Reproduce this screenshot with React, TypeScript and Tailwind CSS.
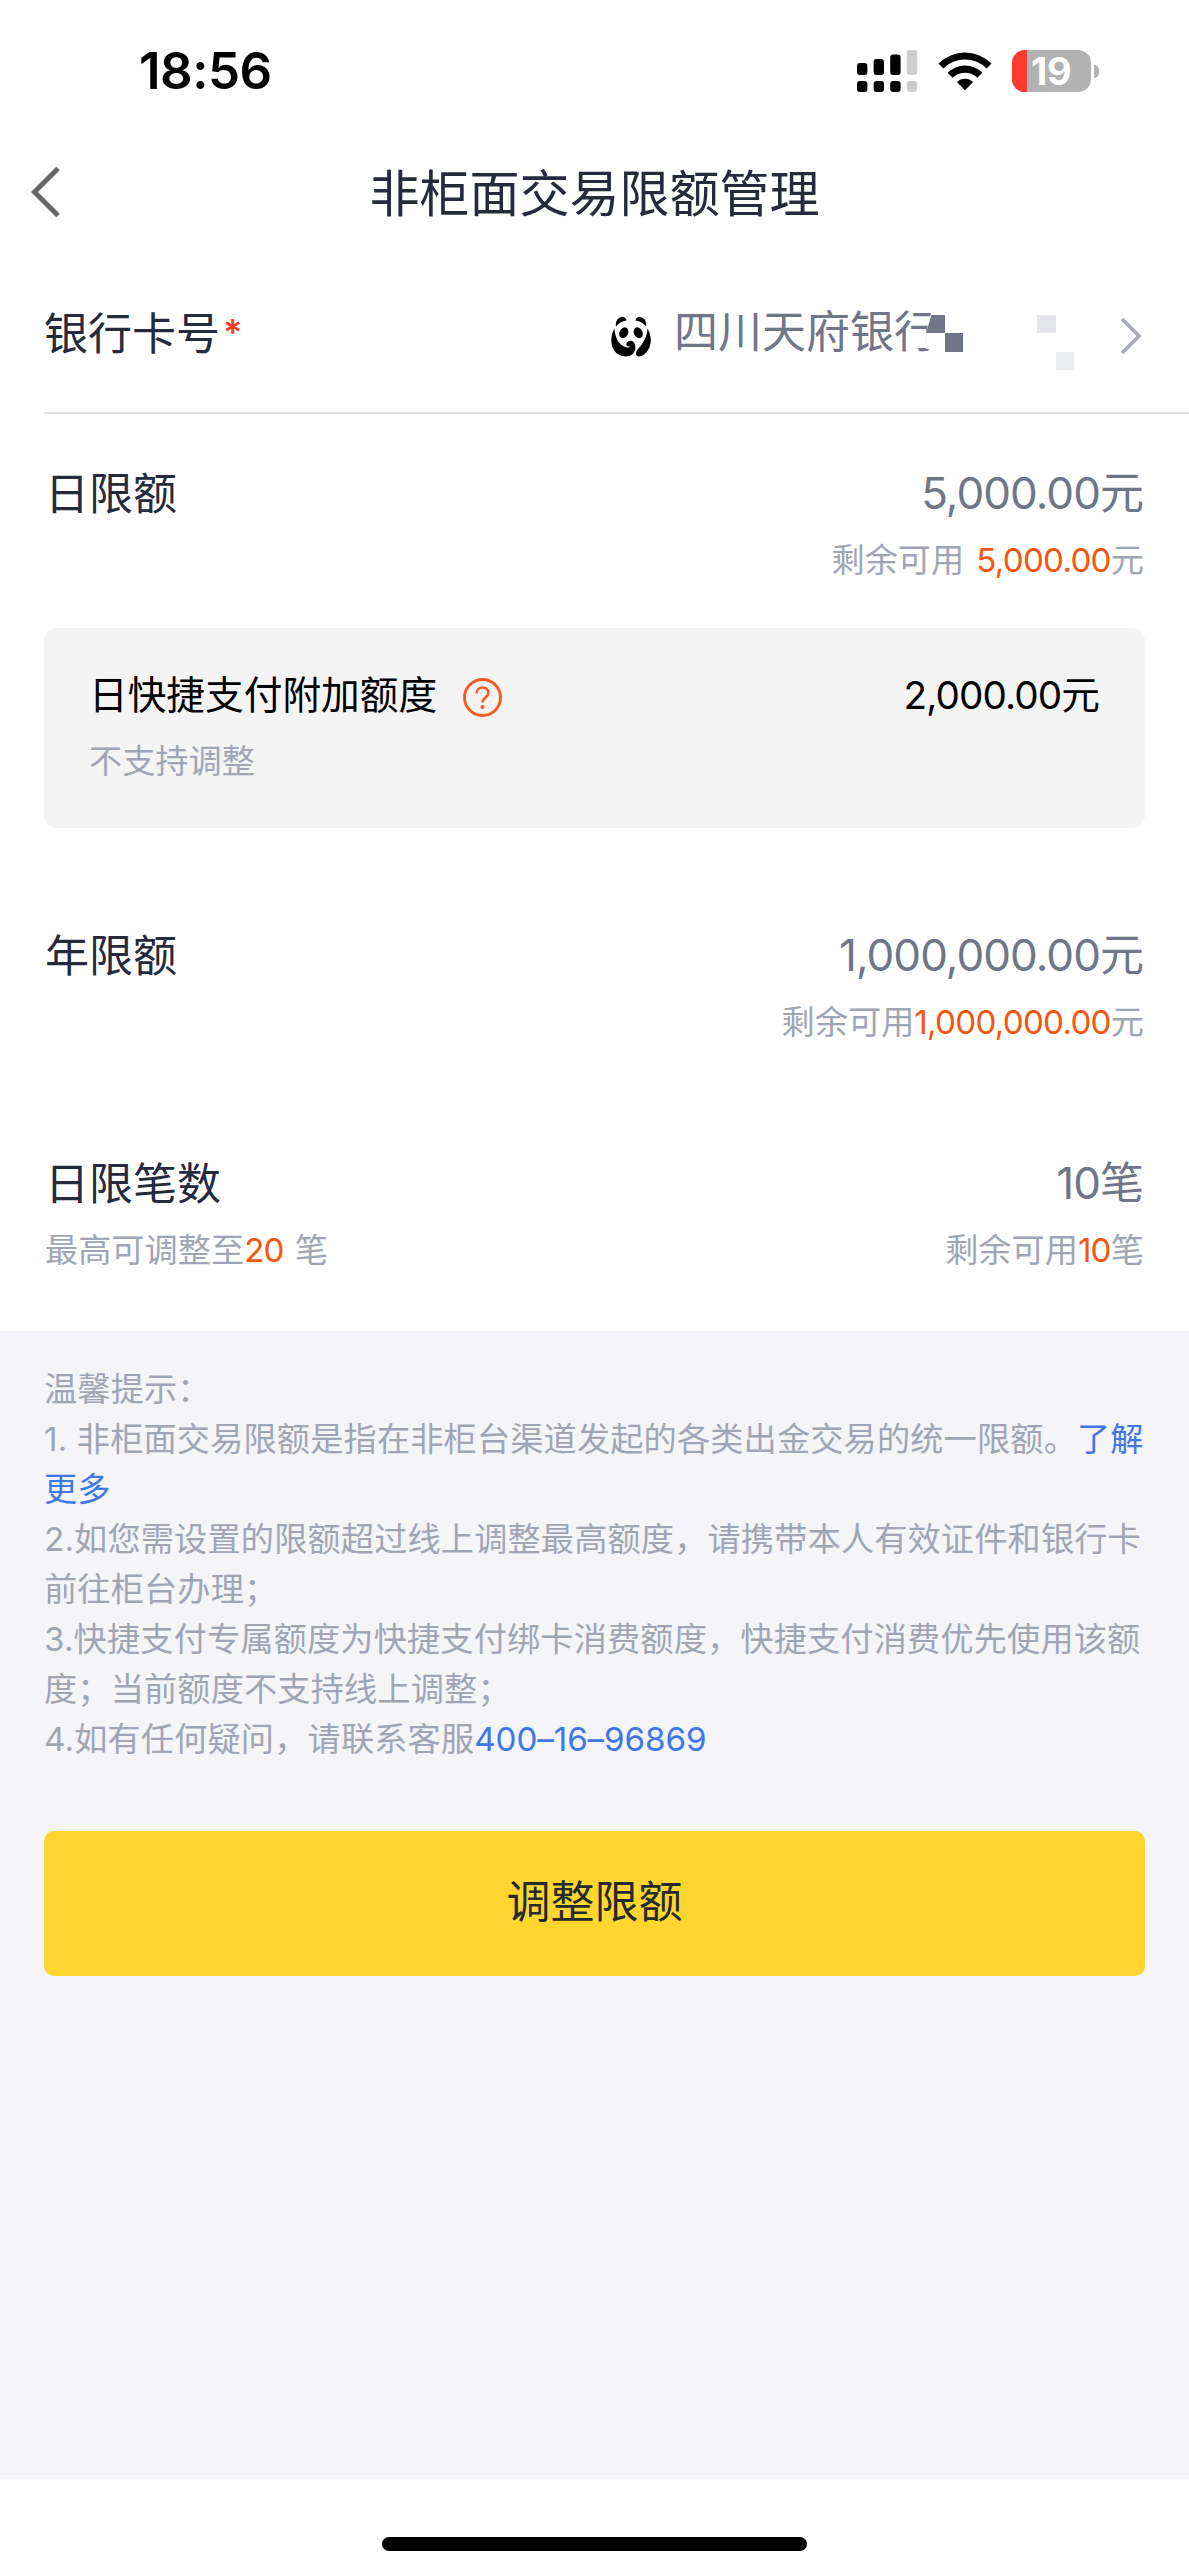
import type { ReactNode } from 'react'

const TIPS: ReactNode[] = [
  '温馨提示：',
  <>
    1. 非柜面交易限额是指在非柜台渠道发起的各类出金交易的统一限额。<a className="text-[#3f77e6]">了解</a>
  </>,
  <a className="text-[#3f77e6]">更多</a>,
  '2.如您需设置的限额超过线上调整最高额度，请携带本人有效证件和银行卡',
  '前往柜台办理；',
  '3.快捷支付专属额度为快捷支付绑卡消费额度，快捷支付消费优先使用该额',
  '度；当前额度不支持线上调整；',
  <>
    4.如有任何疑问，请联系客服<a className="tracking-[-0.1px] text-[#3f77e6]">400–16–96869</a>
  </>,
]

function SignalIcon() {
  const heights = [12, 16, 20.5, 25]
  return (
    <svg width="61" height="42" viewBox="0 0 61 42">
      {heights.map((h, i) => (
        <g key={h} fill={i === 3 ? '#cccccc' : '#000'}>
          <rect x={i * 16.6} y={25 - h} width="10.4" height={h} rx="3" />
          <rect x={i * 16.6} y="31" width="10.4" height="11" rx="3" />
        </g>
      ))}
    </svg>
  )
}

function WifiIcon() {
  return (
    <svg width="54" height="40" viewBox="0 0 54 40">
      <path d="M0.5 12.5 A37.5 37.5 0 0 1 53.5 12.5 L48.6 17.5 A30.5 30.5 0 0 0 5.4 17.5 Z" />
      <path d="M9.6 21.8 A24.6 24.6 0 0 1 44.4 21.8 L39.3 26.8 A17.5 17.5 0 0 0 14.7 26.8 Z" />
      <path d="M18.9 31 A11.5 11.5 0 0 1 35.1 31 L27 39.2 Z" />
    </svg>
  )
}

function BatteryIcon() {
  return (
    <div className="flex items-center gap-[3px]">
      <div className="flex h-[42px] w-[79px] items-center rounded-[13px] bg-[#b2b2b2]">
        <div className="h-full w-[15px] rounded-l-[13px] bg-[#ff3b30]" />
        <span className="ml-[4px] text-[38px] font-bold leading-[42px] tracking-[-0.5px] text-white">19</span>
      </div>
      <div className="h-[13px] w-[5px] rounded-r-full bg-[#b2b2b2]" />
    </div>
  )
}

function PandaLogo() {
  return (
    <svg className="mt-[4px]" width="40" height="41" viewBox="0 0 40 41">
      <path d="M5 10.5 C4 4 8 0.5 12 1 C14 1.3 15.5 3 15.5 4.5 C11 5 7.5 7 5 10.5 Z" />
      <path d="M35 10.5 C36 4 32 0.5 28 1 C26 1.3 24.5 3 24.5 4.5 C29 5 32.5 7 35 10.5 Z" />
      <ellipse cx="12.8" cy="16.8" rx="4.3" ry="5.7" transform="rotate(28 12.8 16.8)" />
      <ellipse cx="27.2" cy="16.8" rx="4.3" ry="5.7" transform="rotate(-28 27.2 16.8)" />
      <path d="M3.5 12.5 C-0.5 19 -1 29 3.5 35 C8.5 41.5 18 42 22 37.5 C25 34 24.5 31 24 29 C23 25 20 24 17 25.5 C14.5 27 15 30.5 18 30.5 C19 30.5 19.5 30 20 29.5 C18.5 32.5 14 32 10 28.5 C5.5 24.5 4 19 3.5 12.5 Z" />
      <path d="M36.5 12.5 C40.5 19 41 28 37 34 C34 39 29 41.5 26 40 C24 38.5 25 35.5 27 33 C32.5 27 36 21 36.5 12.5 Z" />
    </svg>
  )
}

function HelpIcon() {
  return (
    <svg className="mt-[6px]" width="39" height="39" viewBox="0 0 39 39" fill="none" stroke="#f25c1f">
      <circle cx="19.5" cy="19.5" r="18" strokeWidth="2.9" />
      <path d="M13.5 15.5 C13.5 7.5 25.5 7.5 25.5 15 C25.5 19 19.5 19.5 19.5 24.5" strokeWidth="2.5" />
      <circle cx="19.5" cy="29" r="2" fill="#f25c1f" stroke="none" />
    </svg>
  )
}

interface LimitRowProps {
  label: string
  value: string
  hint?: ReactNode
  remain: ReactNode
}

function LimitRow({ label, value, hint, remain }: LimitRowProps) {
  return (
    <div className="flex justify-between px-[45px]">
      <div>
        <p className="pt-px text-[44px] leading-[66px] text-[#252a3d]">{label}</p>
        {hint && <p className="-mt-px text-[33.2px] leading-[68px] text-[#a0a5b5]">{hint}</p>}
      </div>
      <div className="text-right">
        <p className="text-[44px] leading-[66px] text-[#707587]">
          <span className="tracking-[-0.95px]">{value.slice(0, -1)}</span>
          {value.slice(-1)}
        </p>
        <p className="text-[33.2px] leading-[68px] text-[#a0a5b5]">{remain}</p>
      </div>
    </div>
  )
}

function Accent({ children }: { children: ReactNode }) {
  return <span className="tracking-[-0.75px] text-[#f5560f]">{children}</span>
}

export default function App() {
  return (
    <div className="flex h-[2573px] w-[1189px] flex-col overflow-hidden whitespace-nowrap bg-white font-[Inter,'Noto_Sans_CJK_SC',sans-serif] font-normal">
      <header className="flex h-[142px] items-center justify-between pl-[139px] pr-[90px]">
        <span className="text-[51px] font-semibold tracking-[-0.5px] text-black">18:56</span>
        <div className="flex items-center">
          <SignalIcon />
          <div className="ml-5 mr-5">
            <WifiIcon />
          </div>
          <BatteryIcon />
        </div>
      </header>

      <nav className="flex h-[100px] items-center pl-[30px]">
        <svg width="30" height="52" viewBox="0 0 30 52" fill="none" stroke="#666" strokeWidth="5">
          <path d="M28 2.5 L4.5 26 L28 49.5" />
        </svg>
        <h1 className="mr-[60px] flex-1 pt-1 text-center text-[50px] text-[#252a3d]">非柜面交易限额管理</h1>
      </nav>

      <section className="ml-[44px] flex h-[172px] items-center justify-between border-b-2 border-[#e0e1e3] pr-[47px] pt-[14px]">
        <p className="flex items-center text-[44px] text-[#252a3d]">
          银行卡号<span className="ml-[3px] pb-1 text-[36px] font-semibold text-[#f5401f]">*</span>
        </p>
        <div className="flex items-center">
          <PandaLogo />
          <div className="relative ml-[23px] w-[446px] text-[44px] text-[#707587]">
            <span className="relative -top-[2px]">四川天府银行</span>
            {/* masked card number */}
            <svg className="absolute left-[245px] top-1/2 -mt-[19px] overflow-visible" width="160" height="56" viewBox="0 0 160 56">
              <path d="M12.5 -4 H26 V42 H10.5 V34 H7 V18 Z" fill="#fff" />
              <path d="M12.5 0 H26 V18 H7 Z M26 18 H44 V37 H26 Z" fill="#707587" />
              <rect x="118" y="0" width="19" height="18" fill="#e4e5e8" />
              <rect x="137" y="37" width="18" height="18" fill="#ebecee" />
            </svg>
          </div>
          <svg className="mt-1" width="22" height="38" viewBox="0 0 22 38" fill="none" stroke="#a3a8b3" strokeWidth="3.6">
            <path d="M2 2 L19 19 L2 36" />
          </svg>
        </div>
      </section>

      <div className="h-[46px]" />
      <LimitRow
        label="日限额"
        value="5,000.00元"
        remain={
          <>
            剩余可用
            <span className="ml-[12px]">
              <Accent>5,000.00</Accent>元
            </span>
          </>
        }
      />

      <section className="mx-[44px] mt-[34px] h-[200px] rounded-xl bg-[#f4f4f4] px-[45px] pt-[34px]">
        <div className="flex h-[66px] items-center justify-between text-[38.7px] text-black">
          <div className="flex items-center gap-[26px]">
            <span>日快捷支付附加额度</span>
            <HelpIcon />
          </div>
          <span>
            <span className="tracking-[-0.9px]">2,000.00</span>元
          </span>
        </div>
        <p className="text-[33.2px] leading-[66px] text-[#a0a5b5]">不支持调整</p>
      </section>

      <div className="h-[94px]" />
      <LimitRow
        label="年限额"
        value="1,000,000.00元"
        remain={
          <>
            剩余可用<Accent>1,000,000.00</Accent>元
          </>
        }
      />
      <div className="h-[94px]" />
      <LimitRow
        label="日限笔数"
        value="10笔"
        hint={
          <>
            最高可调整至<Accent>20</Accent>
            <span className="ml-[11px]">笔</span>
          </>
        }
        remain={
          <>
            剩余可用<Accent>10</Accent>笔
          </>
        }
      />

      <main className="mt-[47px] h-[1148px] bg-[#f4f4f9] px-[44px] pt-[33px]">
        <ul>
          {TIPS.map((tip, i) => (
            <li key={i} className="h-[50px] text-[33.2px] leading-[50px] tracking-[0.15px] text-[#a0a5b5]">
              {tip}
            </li>
          ))}
        </ul>
        <button className="mt-[67px] flex h-[145px] w-[1101px] items-center justify-center rounded-[10px] bg-[#ffd530] pb-1 text-[44px] text-[#252a2d]">
          调整限额
        </button>
      </main>

      <footer className="flex flex-1 items-end justify-center pb-[22px]">
        <div className="h-[14px] w-[425px] rounded-full bg-black" />
      </footer>
    </div>
  )
}
